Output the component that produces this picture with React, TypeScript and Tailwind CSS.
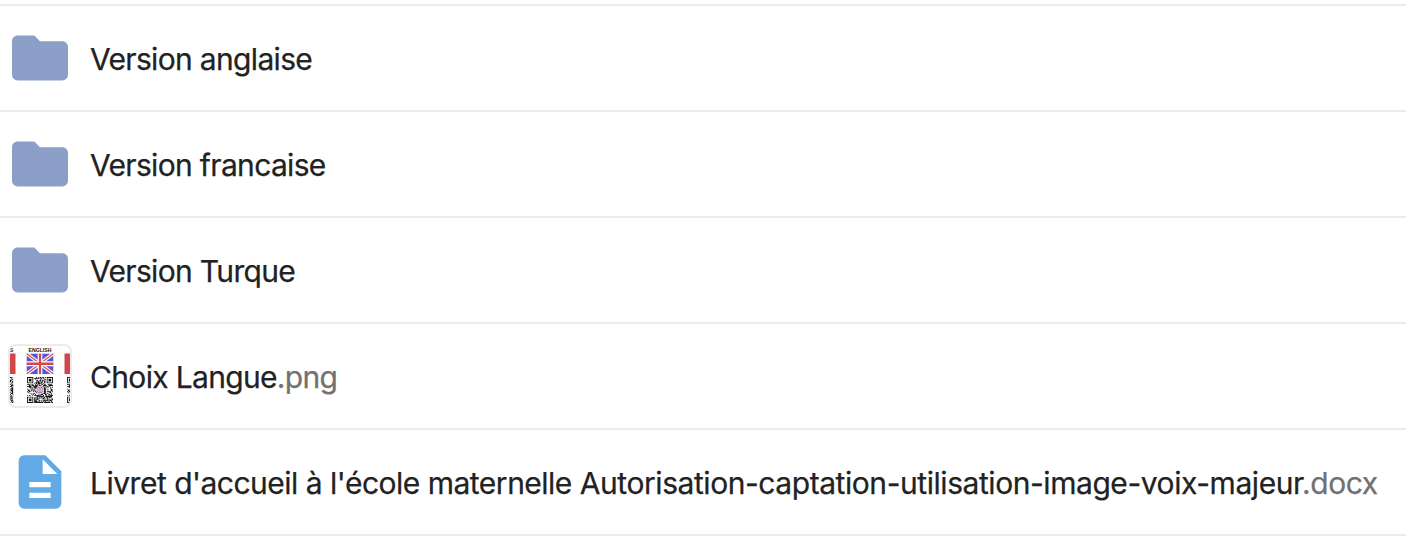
import type { ReactNode } from 'react';

function FolderIcon() {
  return (
    <svg viewBox="-0.143 -0.143 24.286 24.286" className="h-[68px] w-[68px] shrink-0" fill="#8b9fc9">
      <path d="M10 4H4c-1.11 0-2 .89-2 2v12a2 2 0 0 0 2 2h16a2 2 0 0 0 2-2V8c0-1.11-.9-2-2-2h-8l-2-2z" />
    </svg>
  );
}

function DocumentIcon() {
  return (
    <svg viewBox="0 0 24 24" className="h-16 w-16 shrink-0" fill="#62a9e5">
      <path d="M6 2a2 2 0 0 0-2 2v16a2 2 0 0 0 2 2h12a2 2 0 0 0 2-2V8l-6-6H6zm7 1.5L18.5 9H13V3.5zM8 12h8v2H8v-2zm0 4h8v2H8v-2z" />
    </svg>
  );
}

const SIZE = 29;

function finder(x: number, y: number): boolean | null {
  for (const [ox, oy] of [[0, 0], [SIZE - 7, 0], [0, SIZE - 7]]) {
    const dx = x - ox;
    const dy = y - oy;
    if (dx >= -1 && dx <= 7 && dy >= -1 && dy <= 7) {
      const ring = Math.max(Math.abs(dx - 3), Math.abs(dy - 3));
      return ring === 3 || ring <= 1;
    }
  }
  return null;
}

function qrPath(): string {
  let seed = 20;
  let d = '';
  for (let y = 0; y < SIZE; y++) {
    for (let x = 0; x < SIZE; x++) {
      seed = (seed * 1103515245 + 12345) % 2147483648;
      const fixed = finder(x, y);
      if (fixed ?? seed / 2147483648 > 0.45) d += `M${x} ${y}h1v1h-1z`;
    }
  }
  return d;
}

const QR = qrPath();

function UnionJack({ x, y, w, h }: { x: number; y: number; w: number; h: number }) {
  return (
    <svg x={x} y={y} width={w} height={h} viewBox="0 0 54 40" preserveAspectRatio="none">
      <rect width="54" height="40" fill="#5555d8" />
      <path d="M0 0L54 40M54 0L0 40" stroke="#fff" strokeWidth="7" />
      <path d="M0 0L54 40M54 0L0 40" stroke="#d3484b" strokeWidth="2.4" />
      <path d="M27 0V40M0 20H54" stroke="#fff" strokeWidth="9.5" />
      <path d="M27 0V40M0 20H54" stroke="#d3484b" strokeWidth="4.6" />
    </svg>
  );
}

function Thumbnail() {
  return (
    <div className="h-16 w-16 shrink-0 overflow-hidden rounded-lg border-2 border-[#ebebeb] bg-white">
      <svg viewBox="2 2 60 60" className="h-full w-full">
        <path d="M12 2V62M52 2V62M2 9H62M2 30.5H62" stroke="#f3f3f3" strokeWidth=".5" />
        <text x="32" y="7.8" textAnchor="middle" textLength="23" lengthAdjust="spacingAndGlyphs" fontFamily="Liberation Sans, sans-serif" fontWeight="700" fontSize="5.3" fill="#111">ENGLISH</text>
        <text x="1.7" y="7.8" fontFamily="Liberation Sans, sans-serif" fontWeight="700" fontSize="5.3" fill="#222">S</text>
        <rect x="2" y="9.5" width="5.5" height="20.5" fill="#ce474a" />
        <rect x="56.5" y="9.5" width="5.5" height="20.5" fill="#ce474a" />
        <UnionJack x={18.5} y={9.5} w={27} h={20.5} />
        <g fill="#161616">
          <svg x="19" y="33" width="26" height="26" viewBox="0 0 29 29"><path d={QR} /></svg>
          <svg x="2" y="33" width="3.3" height="26" viewBox="17 0 3.7 29"><path d={QR} /></svg>
          <svg x="59" y="33" width="3" height="26" viewBox="0 0 3.35 29"><path d={QR} /></svg>
        </g>
        <circle cx="32" cy="46" r="4.2" fill="#e8c5d4" />
        <UnionJack x={28.8} y={43} w={6.4} h={6} />
      </svg>
    </div>
  );
}

function Row({ icon, name, ext }: { icon: ReactNode; name: ReactNode; ext?: ReactNode }) {
  return (
    <li className="flex h-[106px] items-center border-b-2 border-[#ebebeb]">
      <div className="flex w-20 shrink-0 items-center justify-center">{icon}</div>
      <div className="pl-[10px] pt-px text-[30px] leading-10 tracking-[-0.67px] whitespace-nowrap text-[#222] [-webkit-text-stroke:0.25px]">
        {name}
        {ext && <span className="text-[#717171]">{ext}</span>}
      </div>
    </li>
  );
}

export default function App() {
  return (
    <main className="h-[540px] w-[1406px] overflow-hidden bg-white pt-1 font-['Inter',sans-serif]">
      <ul className="border-t-2 border-[#ebebeb]">
        <Row icon={<FolderIcon />} name="Version anglaise" />
        <Row icon={<FolderIcon />} name="Version francaise" />
        <Row icon={<FolderIcon />} name="Version Turque" />
        <Row icon={<Thumbnail />} name="Choix Langue" ext=".png" />
        <Row
          icon={<DocumentIcon />}
          name={
            <>
              <span className="tracking-[-0.5px]">Livret d'accueil à l'école maternelle </span>
              <span className="tracking-[-0.44px]">Autorisation-captation-utilisation-image-voix-majeur</span>
            </>
          }
          ext={<span className="tracking-[-0.44px]">.docx</span>}
        />
      </ul>
    </main>
  );
}
